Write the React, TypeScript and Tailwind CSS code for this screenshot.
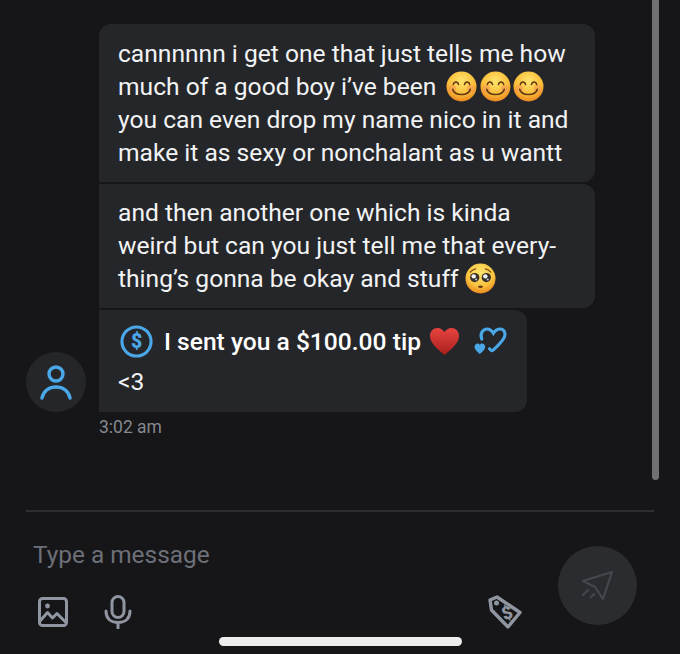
const smile = (
  <svg viewBox="0 0 32 32" className="ml-[2.500px] inline-block h-[31px] w-[31px] align-[-7px]">
    <defs>
      <radialGradient id="smileFace" cx="50%" cy="32%" r="72%">
        <stop offset="0%" stopColor="#fee56c" />
        <stop offset="60%" stopColor="#f9bd3a" />
        <stop offset="100%" stopColor="#e9801a" />
      </radialGradient>
    </defs>
    <circle cx="16" cy="16" r="15.5" fill="url(#smileFace)" />
    <circle cx="6.500" cy="18.500" r="4" fill="#f38f55" opacity="0.5" />
    <circle cx="25.500" cy="18.500" r="4" fill="#f38f55" opacity="0.5" />
    <path d="M7.500 14c1-3.500 4.500-3.500 5.500 0M19 14c1-3.500 4.500-3.500 5.500 0" fill="none" stroke="#5f3712" strokeWidth="1.500" strokeLinecap="round" />
    <path d="M7 19c2 7 16 7 18 0" fill="none" stroke="#5f3712" strokeWidth="1.700" strokeLinecap="round" />
  </svg>
);

const pleading = (
  <svg viewBox="0 0 32 32" className="inline-block h-[31px] w-[31px] align-[-7px]">
    <defs>
      <radialGradient id="pleadFace" cx="50%" cy="32%" r="72%">
        <stop offset="0%" stopColor="#fee56c" />
        <stop offset="60%" stopColor="#f9c440" />
        <stop offset="100%" stopColor="#e9801a" />
      </radialGradient>
    </defs>
    <circle cx="16" cy="16" r="15.500" fill="url(#pleadFace)" />
    <path d="M5.500 9.500c1.500-2 3-3 5.500-3.500M26.500 9.500c-1.500-2-3-3-5.500-3.500" fill="none" stroke="#7a4a1a" strokeWidth="1.200" strokeLinecap="round" />
    <circle cx="10" cy="15" r="4.800" fill="#3a2f2a" />
    <circle cx="22" cy="15" r="4.800" fill="#3a2f2a" />
    <circle cx="9" cy="13.800" r="2.300" fill="#eef2f6" />
    <circle cx="21" cy="13.800" r="2.300" fill="#eef2f6" />
    <circle cx="11.500" cy="17" r="1.100" fill="#b5cde0" />
    <circle cx="23.500" cy="17" r="1.100" fill="#b5cde0" />
    <ellipse cx="16" cy="24.500" rx="2.500" ry="1.300" fill="#6b3f16" />
  </svg>
);

function App() {
  return (
    <div className="relative flex h-[654px] w-[680px] flex-col overflow-hidden bg-[#161618] font-['Roboto',sans-serif]">
      <div className="absolute left-[652px] top-0 h-[480px] w-[7px] rounded-b-full bg-[#6f7072]" />

      <div className="h-[510px] pt-[24px]">
        <div className="flex items-end gap-[13px] pl-[26px]">
          <div className="flex h-[60px] w-[60px] items-center justify-center rounded-full bg-[#25262a]">
            <svg viewBox="0 0 32 35" className="h-[35px] w-[32px]" fill="none" stroke="#4aa8e8" strokeWidth="3.400" strokeLinecap="round">
              <circle cx="16" cy="9" r="7" />
              <path d="M2 33c1.500-7 7-11 14-11s12.500 4 14 11" />
            </svg>
          </div>
          <div className="flex flex-col gap-[2px] whitespace-nowrap text-[24.6px] leading-[33px] text-[#f2f3f4]">
            <div className="w-[496px] rounded-r-[12px] rounded-tl-[12px] bg-[#25262a] px-[19px] pb-[13px] pt-[13px]">
              cannnnnn i get one that just tells me how
              <br />
              much of a good boy i’ve been <span className="ml-[1.500px]">{smile}</span>{smile}{smile}
              <br />
              you can even drop my name nico in it and
              <br />
              make it as sexy or nonchalant as u wantt
            </div>
            <div className="w-[496px] rounded-r-[12px] bg-[#25262a] px-[19px] pb-[13px] pt-[12px]">
              and then another one which is kinda
              <br />
              weird but can you just tell me that every-
              <br />
              thing’s gonna be okay and stuff {pleading}
            </div>
            <div className="w-[428px] rounded-r-[12px] bg-[#25262a] px-[19px] pb-[14px] pt-[14px]">
              <div className="flex h-[34px] items-center">
                <svg viewBox="0 0 34 34" className="ml-[2px] h-[33px] w-[33px] shrink-0">
                  <circle cx="17" cy="17" r="15" fill="none" stroke="#4aa8e8" strokeWidth="3.200" />
                  <text x="17" y="24" textAnchor="middle" fontSize="20" fontWeight="900" fill="#4aa8e8" fontFamily="Roboto, sans-serif">$</text>
                </svg>
                <span className="ml-[11px] font-medium text-white">I sent you a $100.00 tip</span>
                <svg viewBox="0 0 32 30" className="ml-[8px] h-[29px] w-[31px] shrink-0">
                  <defs>
                    <linearGradient id="redHeart" x1="0" y1="0" x2="0" y2="1">
                      <stop offset="0%" stopColor="#e8443f" />
                      <stop offset="100%" stopColor="#a81f1c" />
                    </linearGradient>
                  </defs>
                  <path d="M16 29C8 22 1 16.500 1 9c0-4.500 3.500-8 7.800-8 3 0 5.700 1.700 7.200 4.500C17.500 2.700 20.200 1 23.200 1 27.500 1 31 4.500 31 9c0 7.500-7 13-15 20z" fill="url(#redHeart)" />
                </svg>
                <svg viewBox="0 0 34 30" className="ml-[13px] h-[29px] w-[34px] shrink-0">
                  <path d="M8.500 12.500C6 6.500 10 2 14 2c3 0 5 2 6.500 4.500C22 4 24.500 2 27.500 2c3.500 0 5 3 5 6 0 5-7 11-12.500 16-1 1-2.500 0-3.500-1.500" fill="none" stroke="#4aa8e8" strokeWidth="3.200" strokeLinecap="round" />
                  <path d="M6.500 28C3.500 25.500 1 23.500 1 20.500 1 18.500 2.500 17 4.200 17c1 0 1.800.5 2.300 1.500.5-1 1.300-1.500 2.300-1.500 1.700 0 3.200 1.500 3.200 3.500 0 3-2.500 5-5.500 7.500z" fill="#4aa8e8" />
                </svg>
              </div>
              <div className="mt-[7px]">&lt;3</div>
            </div>
          </div>
        </div>
        <p className="mt-[3px] pl-[99px] text-[17.500px] leading-[24px] text-[#85888e]">3:02 am</p>
      </div>

      <div className="mx-[26px] h-[2px] bg-[#2c2d31]" />

      <div className="flex flex-1 flex-col">
        <div className="flex">
          <div className="flex flex-1 flex-col">
            <p className="mt-[29px] pl-[33px] text-[24.4px] leading-[28px] text-[#6d7078]">Type a message</p>
            <div className="mt-[26px] flex items-center pl-[38px]">
              <svg viewBox="0 0 30 30" className="h-[30px] w-[30px]" fill="none" stroke="#9096a1" strokeWidth="3" strokeLinejoin="round">
                <rect x="1.500" y="1.500" width="27" height="27" rx="3" />
                <circle cx="9.500" cy="9" r="2.400" fill="#9096a1" stroke="none" />
                <path d="M2 24l7.500-8.500 5 5.500 4.500-4.500 9.500 9.500" />
              </svg>
              <svg viewBox="0 0 28 34" className="ml-[36px] h-[34px] w-[28px]" fill="none" stroke="#9096a1" strokeWidth="3" strokeLinecap="round">
                <rect x="8" y="1.500" width="12" height="21" rx="6" />
                <path d="M2 16c0 8 5 11.500 12 11.500S26 24 26 16M14 27.500V33" />
              </svg>
              <svg viewBox="0 0 35 34" className="ml-[356px] h-[34px] w-[35px]" fill="none" stroke="#9096a1" strokeWidth="3.400" strokeLinejoin="round">
                <path d="M2 5L9 2l23 15.500L20 32 3.500 15z" />
                <circle cx="8.500" cy="8" r="2.500" fill="#9096a1" stroke="none" />
                <text x="19" y="24" textAnchor="middle" fontSize="18" fontWeight="900" fill="#9096a1" stroke="none" fontFamily="Roboto, sans-serif" transform="rotate(-20 19 18)">$</text>
              </svg>
            </div>
          </div>
          <div className="mr-[43px] mt-[34px] flex h-[79px] w-[79px] items-center justify-center rounded-full bg-[#2b2c30]">
            <svg viewBox="0 0 32 30" className="h-[30px] w-[32px]" fill="none" stroke="#45474c" strokeWidth="2.200" strokeLinejoin="round" strokeLinecap="round">
              <path d="M1 10L30 1l-9 27-8-12z" />
              <path d="M1 24l5-5M9 26l3-3" />
            </svg>
          </div>
        </div>
        <div className="mx-auto mt-[8px] h-[9px] w-[243px] rounded-full bg-[#ededed]" />
      </div>
    </div>
  );
}

export default App;
